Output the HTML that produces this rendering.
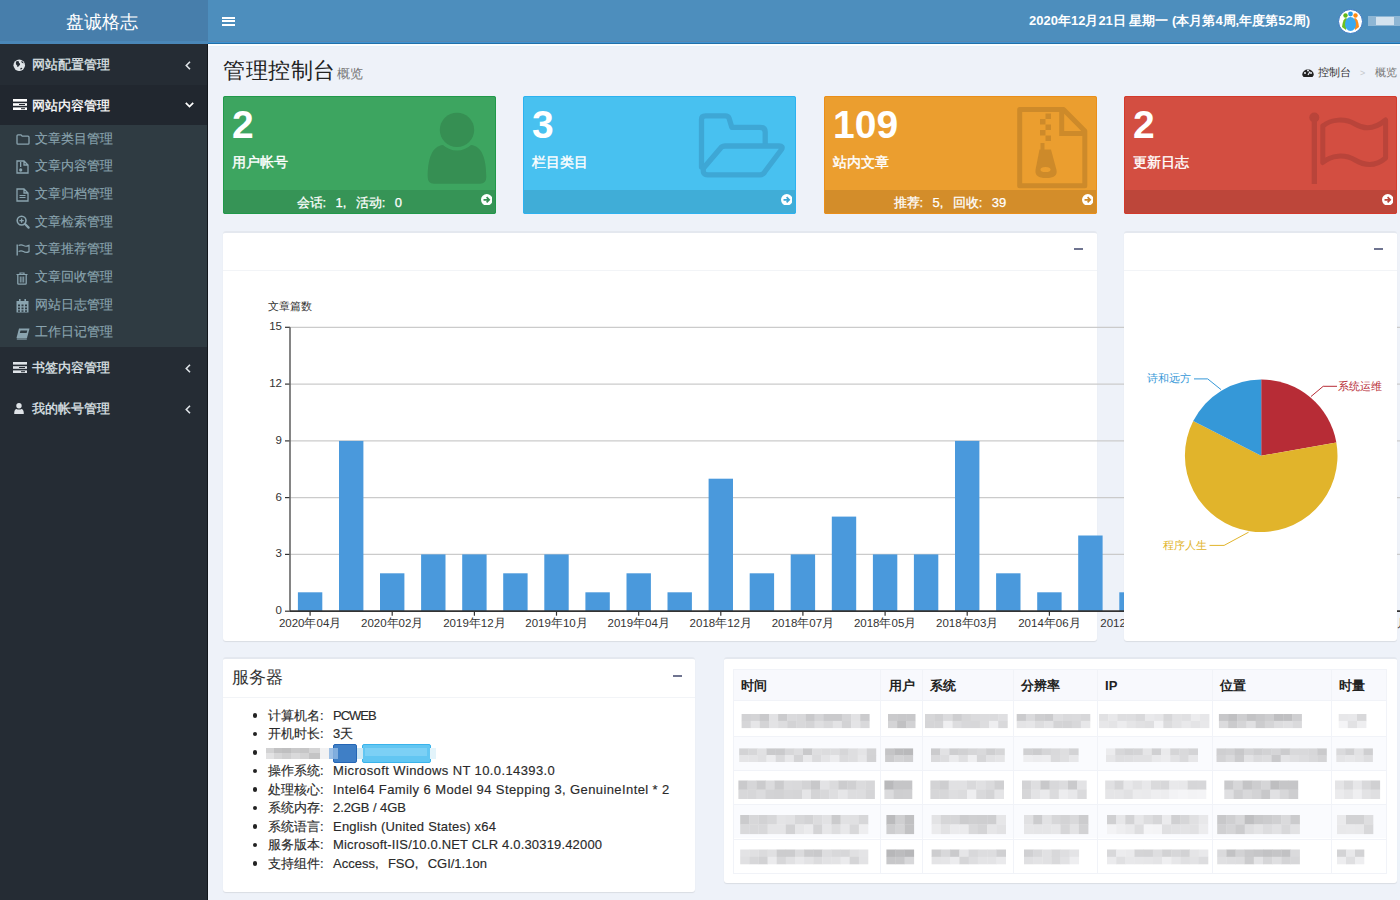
<!DOCTYPE html><html><head><meta charset="utf-8"><style>
*{box-sizing:border-box;margin:0;padding:0}
html,body{width:1400px;height:900px;overflow:hidden;background:#eef2f9;font-family:"Liberation Sans",sans-serif;color:#333}
.abs{position:absolute}
svg{display:block}
.t{position:absolute;white-space:nowrap;line-height:1}
.fw{display:inline-block;width:1em;text-align:left}
#logo{left:0;top:0;width:208px;height:44px;background:#477eab}
#nav{left:208px;top:0;width:1192px;height:44px;background:#4d8ebd}
#side{left:0;top:44px;width:208px;height:856px;background:#252c34}
.sbox{position:absolute;top:96px;width:273px;height:118px;color:#fff;border-radius:2px;overflow:hidden}
.sbox:after{content:"";position:absolute;left:0;top:0;right:0;bottom:0;border:1px solid var(--e);border-radius:2px}
.box{position:absolute;background:#fff;border-radius:3px;border-top:2px solid #e4e8ef;box-shadow:0 1px 1px rgba(0,0,0,0.09)}
.minus{position:absolute;width:9px;height:2.2px;background:#6f7490}
</style></head><body>
<div id="logo" class="abs"><div class="abs" style="left:0;top:41px;width:208px;height:3px;background:#4a87b8"></div><div class="t" style="left:66px;top:13px;font-size:18.3px;color:#fff">盘诚格志</div></div>
<div id="nav" class="abs">
<div class="abs" style="left:0;top:41px;width:1192px;height:1px;background:#5787b0"></div>
<div class="abs" style="left:0;top:42px;width:1192px;height:1px;background:#3f92d0"></div>
<div class="abs" style="left:0;top:43px;width:1192px;height:1px;background:#2070aa"></div>
<div class="abs" style="left:14px;top:16.5px;width:12.5px;height:2px;background:#fff"></div>
<div class="abs" style="left:14px;top:20.35px;width:12.5px;height:2px;background:#fff"></div>
<div class="abs" style="left:14px;top:24.2px;width:12.5px;height:2px;background:#fff"></div>
<div class="t" style="left:821px;top:14px;font-size:13px;color:#fff;font-weight:bold">2020年12月21日 星期一 (本月第4周,年度第52周)</div>
<svg class="abs" style="left:1130px;top:9px" width="25" height="25" viewBox="0 0 25 25">
<circle cx="12.5" cy="12.5" r="12" fill="#fff"/>
<circle cx="12.5" cy="12.5" r="12" fill="none" stroke="#3a78c0" stroke-width="1"/>
<path d="M4 18 Q5 9 8.5 9 Q10 12 8 21 Z" fill="#6cc020"/>
<path d="M21 18 Q20 9 16.5 9 Q15 12 17 21 Z" fill="#ff8c1a"/>
<circle cx="7.5" cy="6.5" r="2.2" fill="#60b818"/>
<circle cx="17.5" cy="6.5" r="2.2" fill="#ff8a10"/>
<circle cx="12.5" cy="5" r="2.4" fill="#2a9be8"/>
<ellipse cx="12.5" cy="15" rx="5.5" ry="7" fill="#3aa8f0"/>
</svg>
<div class="abs" style="left:1160px;top:16px;width:32px;height:10px;background:#9fc0da;opacity:.8"></div>
<div class="abs" style="left:1168px;top:17px;width:18px;height:8px;background:#d4e3ef"></div>
</div>
<div id="side" class="abs">
<div class="abs" style="left:207px;top:0;width:1px;height:856px;background:#12171c"></div>
<div class="abs" style="left:0;top:41px;width:207px;height:40px;background:#21272f"></div>
<div class="abs" style="left:0;top:81px;width:207px;height:222px;background:#2f3b42"></div>
<div class="abs" style="left:13px;top:14.8px"><svg width="12.5" height="12.5" viewBox="0 0 13 13"><circle cx="6.5" cy="6.5" r="6" fill="#dfe4e8"/><path d="M3.2 2.6 Q5 1.8 6.2 2.6 Q5.6 4.2 7.4 5 Q7.6 6.6 6 7.4 Q5.4 8.6 4.6 8.2 Q4.6 6.6 3.4 6 Q2.6 4.6 3.2 2.6 Z M8.6 1.8 Q10.6 2.8 11.2 4.4 Q9.8 4.6 9 3.6 Z M7.8 9.4 Q9 8.8 9.8 9.6 Q9 11 7.6 10.8 Z" fill="#252c34"/></svg></div>
<div class="t" style="left:32px;top:14px;font-size:13px;color:#dfe4e8;-webkit-text-stroke:0.3px #dfe4e8">网站配置管理</div>
<svg class="abs" style="left:185px;top:17px" width="6" height="9" viewBox="0 0 6 9"><path d="M5 0.8 L1.3 4.5 L5 8.2" stroke="#dfe4e8" stroke-width="1.6" fill="none"/></svg>
<div class="abs" style="left:13px;top:55.3px"><svg width="14" height="11" viewBox="0 0 14 11"><rect x="0" y="0" width="14" height="2.6" fill="#fff"/><rect x="0" y="4.2" width="14" height="2.6" fill="#fff"/><rect x="0" y="8.4" width="14" height="2.6" fill="#fff"/><rect x="6" y="5" width="6" height="1" fill="#21272f"/><rect x="8" y="9.2" width="4" height="1" fill="#21272f"/></svg></div>
<div class="t" style="left:32px;top:55px;font-size:13px;color:#fff;-webkit-text-stroke:0.3px #fff">网站内容管理</div>
<svg class="abs" style="left:185px;top:58px" width="9" height="6" viewBox="0 0 9 6"><path d="M0.8 0.8 L4.5 4.6 L8.2 0.8" stroke="#fff" stroke-width="1.7" fill="none"/></svg>
<div class="abs" style="left:13px;top:318px"><svg width="14" height="11" viewBox="0 0 14 11"><rect x="0" y="0" width="14" height="2.6" fill="#dfe4e8"/><rect x="0" y="4.2" width="14" height="2.6" fill="#dfe4e8"/><rect x="0" y="8.4" width="14" height="2.6" fill="#dfe4e8"/><rect x="6" y="5" width="6" height="1" fill="#252c34"/><rect x="8" y="9.2" width="4" height="1" fill="#252c34"/></svg></div>
<div class="t" style="left:32px;top:317px;font-size:13px;color:#dfe4e8;-webkit-text-stroke:0.3px #dfe4e8">书签内容管理</div>
<svg class="abs" style="left:185px;top:320px" width="6" height="9" viewBox="0 0 6 9"><path d="M5 0.8 L1.3 4.5 L5 8.2" stroke="#dfe4e8" stroke-width="1.6" fill="none"/></svg>
<div class="abs" style="left:13.5px;top:358.5px"><svg width="10" height="11.5" viewBox="0 0 10 11.5"><circle cx="5" cy="2.8" r="2.7" fill="#dfe4e8"/><path d="M0.2 10.5 Q0.2 6.4 2.3 5.9 Q5 7.3 7.7 5.9 Q9.8 6.4 9.8 10.5 Q9.8 11.5 8.8 11.5 H1.2 Q0.2 11.5 0.2 10.5 Z" fill="#dfe4e8"/></svg></div>
<div class="t" style="left:32px;top:358px;font-size:13px;color:#dfe4e8;-webkit-text-stroke:0.3px #dfe4e8">我的帐号管理</div>
<svg class="abs" style="left:185px;top:361px" width="6" height="9" viewBox="0 0 6 9"><path d="M5 0.8 L1.3 4.5 L5 8.2" stroke="#dfe4e8" stroke-width="1.6" fill="none"/></svg>
<div class="t" style="left:35px;top:87.7px;font-size:13px;color:#8aa4af;-webkit-text-stroke:0.15px #8aa4af">文章类目管理</div>
<div class="abs" style="left:16px;top:89.5px"><svg width="14" height="11" viewBox="0 0 14 11"><path d="M1 1.8 Q1 0.8 2 0.8 H5 L6.2 2.2 H12 Q13 2.2 13 3.2 V9.2 Q13 10.2 12 10.2 H2 Q1 10.2 1 9.2 Z" fill="none" stroke="#8aa4af" stroke-width="1.3"/></svg></div>
<div class="t" style="left:35px;top:115.4px;font-size:13px;color:#8aa4af;-webkit-text-stroke:0.15px #8aa4af">文章内容管理</div>
<div class="abs" style="left:16px;top:115.5px"><svg width="13" height="14" viewBox="0 0 13 14"><path d="M1 1 H8 L12 5 V13 H1 Z M8 1 V5 H12" fill="none" stroke="#8aa4af" stroke-width="1.3"/><rect x="4" y="2" width="1.3" height="5" fill="#8aa4af"/><ellipse cx="4.7" cy="10" rx="1.6" ry="1.8" fill="#8aa4af"/></svg></div>
<div class="t" style="left:35px;top:143.0px;font-size:13px;color:#8aa4af;-webkit-text-stroke:0.15px #8aa4af">文章归档管理</div>
<div class="abs" style="left:16px;top:143.5px"><svg width="13" height="14" viewBox="0 0 13 14"><path d="M1 1 H8 L12 5 V13 H1 Z M8 1 V5 H12" fill="none" stroke="#8aa4af" stroke-width="1.3"/><path d="M3.5 7.5 H9.5 M3.5 9.5 H9.5" stroke="#8aa4af" stroke-width="1.1"/></svg></div>
<div class="t" style="left:35px;top:170.7px;font-size:13px;color:#8aa4af;-webkit-text-stroke:0.15px #8aa4af">文章检索管理</div>
<div class="abs" style="left:16px;top:171px"><svg width="14" height="14" viewBox="0 0 14 14"><circle cx="5.6" cy="5.6" r="4.4" fill="none" stroke="#8aa4af" stroke-width="1.6"/><path d="M8.8 8.8 L12.6 12.6" stroke="#8aa4af" stroke-width="2.2" stroke-linecap="round"/><path d="M3.4 5.6 H7.8 M5.6 3.4 V7.8" stroke="#8aa4af" stroke-width="1.3"/></svg></div>
<div class="t" style="left:35px;top:198.3px;font-size:13px;color:#8aa4af;-webkit-text-stroke:0.15px #8aa4af">文章推荐管理</div>
<div class="abs" style="left:16px;top:200px"><svg width="14" height="12" viewBox="0 0 14 12"><path d="M1.2 0.5 V11.5" stroke="#8aa4af" stroke-width="1.4"/><path d="M2.6 1.6 Q5 0 7.5 1.6 Q10 3 13 1.4 V7.6 Q10 9.2 7.5 7.6 Q5 6 2.6 7.6" fill="none" stroke="#8aa4af" stroke-width="1.2"/></svg></div>
<div class="t" style="left:35px;top:226.0px;font-size:13px;color:#8aa4af;-webkit-text-stroke:0.15px #8aa4af">文章回收管理</div>
<div class="abs" style="left:16px;top:227.5px"><svg width="12" height="13" viewBox="0 0 12 13"><path d="M0.5 2.5 H11.5 M4 2.5 V1 H8 V2.5" fill="none" stroke="#8aa4af" stroke-width="1.2"/><path d="M1.8 2.5 V11.5 Q1.8 12.2 2.6 12.2 H9.4 Q10.2 12.2 10.2 11.5 V2.5" fill="none" stroke="#8aa4af" stroke-width="1.3"/><path d="M4.3 4.5 V10.5 M6 4.5 V10.5 M7.7 4.5 V10.5" stroke="#8aa4af" stroke-width="1"/></svg></div>
<div class="t" style="left:35px;top:253.7px;font-size:13px;color:#8aa4af;-webkit-text-stroke:0.15px #8aa4af">网站日志管理</div>
<div class="abs" style="left:16px;top:255px"><svg width="13" height="14" viewBox="0 0 13 14"><rect x="0.5" y="2" width="12" height="11.5" fill="#8aa4af"/><g fill="#2f3b42"><rect x="2" y="5.5" width="2" height="1.8"/><rect x="5.5" y="5.5" width="2" height="1.8"/><rect x="9" y="5.5" width="2" height="1.8"/><rect x="2" y="8.5" width="2" height="1.8"/><rect x="5.5" y="8.5" width="2" height="1.8"/><rect x="9" y="8.5" width="2" height="1.8"/><rect x="2" y="11.3" width="2" height="1.5"/><rect x="5.5" y="11.3" width="2" height="1.5"/><rect x="9" y="11.3" width="2" height="1.5"/></g><rect x="3" y="0" width="1.6" height="3.5" fill="#8aa4af"/><rect x="8.4" y="0" width="1.6" height="3.5" fill="#8aa4af"/></svg></div>
<div class="t" style="left:35px;top:281.3px;font-size:13px;color:#8aa4af;-webkit-text-stroke:0.15px #8aa4af">工作日记管理</div>
<div class="abs" style="left:16px;top:283.5px"><svg width="14" height="12" viewBox="0 0 14 12"><path d="M3 0.5 H13.5 L11 10 H0.5 Z" fill="#8aa4af"/><path d="M4.5 2.5 H11.3 L10.6 5 H3.8 Z" fill="#2f3b42"/><path d="M0.8 11 H10.8" stroke="#8aa4af" stroke-width="1.2"/></svg></div>
</div>
<div class="abs" style="left:208px;top:44px;width:1192px;height:1.5px;background:#fcfdfd"></div>
<div class="abs" style="left:208px;top:45.5px;width:1192px;height:1px;background:#e6f1fb"></div>
<div class="t" style="left:223px;top:59.5px;font-size:22.4px;color:#222;letter-spacing:0.55px">管理控制台</div>
<div class="t" style="left:337px;top:67px;font-size:13px;color:#777">概览</div>
<svg class="abs" style="left:1302px;top:68px" width="12" height="9" viewBox="0 0 12 9"><path d="M0.2 7 A5.8 5.8 0 1 1 11.8 7 L10.5 9 H1.5 Z" fill="#222"/><circle cx="3" cy="5" r="1" fill="#eef2f9"/><circle cx="6" cy="2.6" r="1" fill="#eef2f9"/><circle cx="9" cy="5" r="1" fill="#eef2f9"/><path d="M6 7 L8 3.5" stroke="#eef2f9" stroke-width="1.2"/></svg>
<div class="t" style="left:1318px;top:67px;font-size:11px;color:#333">控制台</div>
<div class="t" style="left:1360px;top:69px;font-size:9px;color:#c5c8cc">&gt;</div>
<div class="t" style="left:1375px;top:67px;font-size:11px;color:#777">概览</div>
<div class="sbox" style="left:223px;background:#3da560;--e:#20994a">
<svg class="abs" style="left:204px;top:15px" width="60" height="75" viewBox="0 0 60 75"><circle cx="30" cy="18.9" r="17.2" fill="#368f53"/><path d="M0.7 66 C0.7 48 5 35 16 34 A20.6 20.6 0 0 0 44 34 C55 35 59.3 48 59.3 66 Q59.3 72.7 53 72.7 H7 Q0.7 72.7 0.7 66 Z" fill="#368f53"/></svg>
<div class="t" style="left:9px;top:9.3px;font-size:39px;font-weight:bold">2</div>
<div class="t" style="left:9px;top:58.5px;font-size:14px;-webkit-text-stroke:0.4px #fff">用户帐号</div>
<div class="abs" style="left:0;top:94px;width:273px;height:24px;background:rgba(0,0,0,0.1)"></div>
<div class="t" style="left:73.5px;top:100px;font-size:13px;-webkit-text-stroke:0.25px #fff">会话<span class="fw">:</span>1<span class="fw">,</span>活动<span class="fw">:</span>0</div>
<svg class="abs" style="left:257.7px;top:97.6px" width="11.6" height="11.6" viewBox="0 0 11 11"><circle cx="5.5" cy="5.5" r="5.5" fill="#fff"/><path d="M2.4 5.5 H7.6 M5.3 3 L7.8 5.5 L5.3 8" stroke="#368f53" stroke-width="1.6" fill="none"/></svg>
</div>
<div class="sbox" style="left:523px;background:#48c1f0;--e:#2cb2f0">
<svg class="abs" style="left:167px;top:0px" width="100" height="94" viewBox="0 0 100 94"><path d="M11.5 71 V23.5 Q11.5 19.8 15.5 19.8 H35.5 Q38 19.8 39 22 L41.8 31.3 H70 Q75.2 31.3 75.2 36 V48" fill="none" stroke="#3ea7d5" stroke-width="5.3" stroke-linejoin="round" stroke-linecap="round"/><path d="M13.6 72 L31.3 51.2 Q33 50 35 50 H89 Q93.5 50 91.5 53.5 L75 75.5 Q73.5 78.8 70 78.8 H17.8 Q12 78.8 13.6 72 Z" fill="none" stroke="#3ea7d5" stroke-width="5.3" stroke-linejoin="round"/></svg>
<div class="t" style="left:9px;top:9.3px;font-size:39px;font-weight:bold">3</div>
<div class="t" style="left:9px;top:58.5px;font-size:14px;-webkit-text-stroke:0.4px #fff">栏目类目</div>
<div class="abs" style="left:0;top:94px;width:273px;height:24px;background:rgba(0,0,0,0.1)"></div>
<svg class="abs" style="left:257.7px;top:97.6px" width="11.6" height="11.6" viewBox="0 0 11 11"><circle cx="5.5" cy="5.5" r="5.5" fill="#fff"/><path d="M2.4 5.5 H7.6 M5.3 3 L7.8 5.5 L5.3 8" stroke="#3ea7d5" stroke-width="1.6" fill="none"/></svg>
</div>
<div class="sbox" style="left:824px;background:#eb9e2f;--e:#ea8f1a">
<svg class="abs" style="left:181px;top:0px" width="92" height="100" viewBox="0 0 92 100"><path d="M14.7 13.6 H58.5 L79.8 35 V89.8 H14.7 Z" fill="none" stroke="#cd8a2a" stroke-width="5" stroke-linejoin="round"/><path d="M56.7 14 V37.5 H80" fill="none" stroke="#cd8a2a" stroke-width="5"/>
<g fill="#cd8a2a"><rect x="40.5" y="17.5" width="5.5" height="5.5"/><rect x="35" y="23" width="5.5" height="5.5"/><rect x="40.5" y="28.5" width="5.5" height="5.5"/><rect x="35" y="34" width="5.5" height="5.5"/><rect x="40.5" y="39.5" width="5.5" height="5.5"/><rect x="35.5" y="47" width="4" height="7"/></g>
<path d="M34.5 53.5 H46 L51.5 74 Q53 82 41 82 Q29.5 82 30.5 74 Z" fill="#cd8a2a"/><ellipse cx="40.5" cy="73.5" rx="5" ry="2.6" fill="#eb9e2f"/></svg>
<div class="t" style="left:9px;top:9.3px;font-size:39px;font-weight:bold">109</div>
<div class="t" style="left:9px;top:58.5px;font-size:14px;-webkit-text-stroke:0.4px #fff">站内文章</div>
<div class="abs" style="left:0;top:94px;width:273px;height:24px;background:rgba(0,0,0,0.1)"></div>
<div class="t" style="left:69.5px;top:100px;font-size:13px;-webkit-text-stroke:0.25px #fff">推荐<span class="fw">:</span>5<span class="fw">,</span>回收<span class="fw">:</span>39</div>
<svg class="abs" style="left:257.7px;top:97.6px" width="11.6" height="11.6" viewBox="0 0 11 11"><circle cx="5.5" cy="5.5" r="5.5" fill="#fff"/><path d="M2.4 5.5 H7.6 M5.3 3 L7.8 5.5 L5.3 8" stroke="#cd8a2a" stroke-width="1.6" fill="none"/></svg>
</div>
<div class="sbox" style="left:1124px;background:#d34e41;--e:#d33a2c">
<svg class="abs" style="left:171px;top:0px" width="102" height="94" viewBox="0 0 102 94"><circle cx="19.3" cy="21.5" r="5" fill="#b9443a"/><rect x="16.7" y="22" width="5.3" height="66" fill="#b9443a"/><path d="M27.8 30 C36 23 50 22 60 28 C70 34 80 33 90.6 24 V62 C80 71 70 70 60 64 C50 58 36 59 27.8 66.5 Z" fill="none" stroke="#b9443a" stroke-width="5" stroke-linejoin="round"/></svg>
<div class="t" style="left:9px;top:9.3px;font-size:39px;font-weight:bold">2</div>
<div class="t" style="left:9px;top:58.5px;font-size:14px;-webkit-text-stroke:0.4px #fff">更新日志</div>
<div class="abs" style="left:0;top:94px;width:273px;height:24px;background:rgba(0,0,0,0.1)"></div>
<svg class="abs" style="left:257.7px;top:97.6px" width="11.6" height="11.6" viewBox="0 0 11 11"><circle cx="5.5" cy="5.5" r="5.5" fill="#fff"/><path d="M2.4 5.5 H7.6 M5.3 3 L7.8 5.5 L5.3 8" stroke="#b9443a" stroke-width="1.6" fill="none"/></svg>
</div>
<div class="box" style="left:223px;top:231px;width:873.5px;height:410px"></div>
<div class="abs" style="left:223px;top:270px;width:874px;height:1px;background:#f2f4f7"></div>
<div class="minus" style="left:1074px;top:248px"></div>
<svg class="abs" style="left:0;top:0" width="1400" height="900"><line x1="290.0" y1="554.4" x2="1400" y2="554.4" stroke="#cbcbcb" stroke-width="1.2"/><line x1="290.0" y1="497.6" x2="1400" y2="497.6" stroke="#cbcbcb" stroke-width="1.2"/><line x1="290.0" y1="440.9" x2="1400" y2="440.9" stroke="#cbcbcb" stroke-width="1.2"/><line x1="290.0" y1="384.1" x2="1400" y2="384.1" stroke="#cbcbcb" stroke-width="1.2"/><line x1="290.0" y1="327.3" x2="1400" y2="327.3" stroke="#cbcbcb" stroke-width="1.2"/><line x1="285.0" y1="611.2" x2="290.0" y2="611.2" stroke="#333" stroke-width="1.2"/><text x="282.0" y="614.2" font-size="11.5" text-anchor="end" fill="#333" font-family="Liberation Sans">0</text><line x1="285.0" y1="554.4" x2="290.0" y2="554.4" stroke="#333" stroke-width="1.2"/><text x="282.0" y="557.4" font-size="11.5" text-anchor="end" fill="#333" font-family="Liberation Sans">3</text><line x1="285.0" y1="497.6" x2="290.0" y2="497.6" stroke="#333" stroke-width="1.2"/><text x="282.0" y="500.6" font-size="11.5" text-anchor="end" fill="#333" font-family="Liberation Sans">6</text><line x1="285.0" y1="440.9" x2="290.0" y2="440.9" stroke="#333" stroke-width="1.2"/><text x="282.0" y="443.9" font-size="11.5" text-anchor="end" fill="#333" font-family="Liberation Sans">9</text><line x1="285.0" y1="384.1" x2="290.0" y2="384.1" stroke="#333" stroke-width="1.2"/><text x="282.0" y="387.1" font-size="11.5" text-anchor="end" fill="#333" font-family="Liberation Sans">12</text><line x1="285.0" y1="327.3" x2="290.0" y2="327.3" stroke="#333" stroke-width="1.2"/><text x="282.0" y="330.3" font-size="11.5" text-anchor="end" fill="#333" font-family="Liberation Sans">15</text><line x1="290.0" y1="327.3" x2="290.0" y2="611.2" stroke="#666" stroke-width="1.6"/><rect x="297.9" y="592.3" width="24.4" height="18.9" fill="#4a99dc"/><rect x="339.0" y="440.9" width="24.4" height="170.3" fill="#4a99dc"/><rect x="380.0" y="573.3" width="24.4" height="37.9" fill="#4a99dc"/><rect x="421.1" y="554.4" width="24.4" height="56.8" fill="#4a99dc"/><rect x="462.2" y="554.4" width="24.4" height="56.8" fill="#4a99dc"/><rect x="503.2" y="573.3" width="24.4" height="37.9" fill="#4a99dc"/><rect x="544.3" y="554.4" width="24.4" height="56.8" fill="#4a99dc"/><rect x="585.4" y="592.3" width="24.4" height="18.9" fill="#4a99dc"/><rect x="626.5" y="573.3" width="24.4" height="37.9" fill="#4a99dc"/><rect x="667.5" y="592.3" width="24.4" height="18.9" fill="#4a99dc"/><rect x="708.6" y="478.7" width="24.4" height="132.5" fill="#4a99dc"/><rect x="749.7" y="573.3" width="24.4" height="37.9" fill="#4a99dc"/><rect x="790.7" y="554.4" width="24.4" height="56.8" fill="#4a99dc"/><rect x="831.8" y="516.6" width="24.4" height="94.6" fill="#4a99dc"/><rect x="872.9" y="554.4" width="24.4" height="56.8" fill="#4a99dc"/><rect x="913.9" y="554.4" width="24.4" height="56.8" fill="#4a99dc"/><rect x="955.0" y="440.9" width="24.4" height="170.3" fill="#4a99dc"/><rect x="996.1" y="573.3" width="24.4" height="37.9" fill="#4a99dc"/><rect x="1037.2" y="592.3" width="24.4" height="18.9" fill="#4a99dc"/><rect x="1078.2" y="535.5" width="24.4" height="75.7" fill="#4a99dc"/><rect x="1119.3" y="592.3" width="24.4" height="18.9" fill="#4a99dc"/><rect x="1160.4" y="573.3" width="24.4" height="37.9" fill="#4a99dc"/><rect x="1201.4" y="554.4" width="24.4" height="56.8" fill="#4a99dc"/><rect x="1242.5" y="592.3" width="24.4" height="18.9" fill="#4a99dc"/><rect x="1283.6" y="573.3" width="24.4" height="37.9" fill="#4a99dc"/><rect x="1324.7" y="592.3" width="24.4" height="18.9" fill="#4a99dc"/><rect x="1365.7" y="592.3" width="24.4" height="18.9" fill="#4a99dc"/><line x1="290.0" y1="611.2" x2="1400" y2="611.2" stroke="#333" stroke-width="1.8"/><line x1="310.1" y1="611.2" x2="310.1" y2="615.7" stroke="#333" stroke-width="1.2"/><text x="310.1" y="626.7" font-size="11.5" text-anchor="middle" fill="#333" font-family="Liberation Sans">2020年04月</text><line x1="392.2" y1="611.2" x2="392.2" y2="615.7" stroke="#333" stroke-width="1.2"/><text x="392.2" y="626.7" font-size="11.5" text-anchor="middle" fill="#333" font-family="Liberation Sans">2020年02月</text><line x1="474.4" y1="611.2" x2="474.4" y2="615.7" stroke="#333" stroke-width="1.2"/><text x="474.4" y="626.7" font-size="11.5" text-anchor="middle" fill="#333" font-family="Liberation Sans">2019年12月</text><line x1="556.5" y1="611.2" x2="556.5" y2="615.7" stroke="#333" stroke-width="1.2"/><text x="556.5" y="626.7" font-size="11.5" text-anchor="middle" fill="#333" font-family="Liberation Sans">2019年10月</text><line x1="638.7" y1="611.2" x2="638.7" y2="615.7" stroke="#333" stroke-width="1.2"/><text x="638.7" y="626.7" font-size="11.5" text-anchor="middle" fill="#333" font-family="Liberation Sans">2019年04月</text><line x1="720.8" y1="611.2" x2="720.8" y2="615.7" stroke="#333" stroke-width="1.2"/><text x="720.8" y="626.7" font-size="11.5" text-anchor="middle" fill="#333" font-family="Liberation Sans">2018年12月</text><line x1="802.9" y1="611.2" x2="802.9" y2="615.7" stroke="#333" stroke-width="1.2"/><text x="802.9" y="626.7" font-size="11.5" text-anchor="middle" fill="#333" font-family="Liberation Sans">2018年07月</text><line x1="885.1" y1="611.2" x2="885.1" y2="615.7" stroke="#333" stroke-width="1.2"/><text x="885.1" y="626.7" font-size="11.5" text-anchor="middle" fill="#333" font-family="Liberation Sans">2018年05月</text><line x1="967.2" y1="611.2" x2="967.2" y2="615.7" stroke="#333" stroke-width="1.2"/><text x="967.2" y="626.7" font-size="11.5" text-anchor="middle" fill="#333" font-family="Liberation Sans">2018年03月</text><line x1="1049.4" y1="611.2" x2="1049.4" y2="615.7" stroke="#333" stroke-width="1.2"/><text x="1049.4" y="626.7" font-size="11.5" text-anchor="middle" fill="#333" font-family="Liberation Sans">2014年06月</text><line x1="1131.5" y1="611.2" x2="1131.5" y2="615.7" stroke="#333" stroke-width="1.2"/><text x="1131.5" y="626.7" font-size="11.5" text-anchor="middle" fill="#333" font-family="Liberation Sans">2012年08月</text><line x1="1213.6" y1="611.2" x2="1213.6" y2="615.7" stroke="#333" stroke-width="1.2"/><text x="1213.6" y="626.7" font-size="11.5" text-anchor="middle" fill="#333" font-family="Liberation Sans">2012年03月</text><line x1="1295.8" y1="611.2" x2="1295.8" y2="615.7" stroke="#333" stroke-width="1.2"/><text x="1295.8" y="626.7" font-size="11.5" text-anchor="middle" fill="#333" font-family="Liberation Sans">2011年05月</text><line x1="1377.9" y1="611.2" x2="1377.9" y2="615.7" stroke="#333" stroke-width="1.2"/><text x="1377.9" y="626.7" font-size="11.5" text-anchor="middle" fill="#333" font-family="Liberation Sans">2010年01月</text><text x="268" y="310" font-size="11" fill="#333" font-family="Liberation Sans">文章篇数</text></svg>
<div class="box" style="left:1124px;top:231px;width:273px;height:410px"></div>
<div class="abs" style="left:1124px;top:270px;width:273px;height:1px;background:#f2f4f7"></div>
<div class="minus" style="left:1374px;top:248px"></div>
<svg class="abs" style="left:0;top:0" width="1400" height="900"><path d="M1261.2 455.7 L1261.20 379.40 A76.3 76.3 0 0 1 1336.34 442.45 Z" fill="#b72c36"/><path d="M1261.2 455.7 L1336.34 442.45 A76.3 76.3 0 1 1 1193.22 421.06 Z" fill="#e1b42b"/><path d="M1261.2 455.7 L1193.22 421.06 A76.3 76.3 0 0 1 1261.20 379.40 Z" fill="#3598d8"/><polyline points="1311,396.5 1323.2,386.3 1337,386.3" fill="none" stroke="#b72c36"/><text x="1338" y="389.5" font-size="11" fill="#b72c36" font-family="Liberation Sans">系统运维</text><polyline points="1221,389.6 1207.7,378.9 1194,378.9" fill="none" stroke="#3598d8"/><text x="1147" y="381.5" font-size="11" fill="#3598d8" font-family="Liberation Sans">诗和远方</text><polyline points="1248.6,532.2 1224.1,545.4 1209.5,545.4" fill="none" stroke="#e1b42b"/><text x="1163" y="548.5" font-size="11" fill="#e1b42b" font-family="Liberation Sans">程序人生</text></svg>
<div class="box" style="left:223px;top:657px;width:472px;height:234.5px"></div>
<div class="abs" style="left:223px;top:697px;width:472px;height:1px;background:#f2f4f7"></div>
<div class="t" style="left:232px;top:669px;font-size:17px;color:#333">服务器</div>
<div class="minus" style="left:673px;top:675px"></div>
<div class="abs" style="left:252.8px;top:713.3px;width:4.4px;height:4.4px;border-radius:50%;background:#222"></div>
<div class="t" style="left:268px;top:708.5px;font-size:13px;color:#2a2a2a;-webkit-text-stroke:0.15px #2a2a2a">计算机名<span class="fw">:</span><span style="letter-spacing:-1.0px">PCWEB</span></div>
<div class="abs" style="left:252.8px;top:731.8px;width:4.4px;height:4.4px;border-radius:50%;background:#222"></div>
<div class="t" style="left:268px;top:727.0px;font-size:13px;color:#2a2a2a;-webkit-text-stroke:0.15px #2a2a2a">开机时长<span class="fw">:</span><span style="letter-spacing:0px">3天</span></div>
<div class="abs" style="left:252.8px;top:750.3px;width:4.4px;height:4.4px;border-radius:50%;background:#222"></div>
<div class="abs" style="left:266px;top:748px;width:8px;height:5.3px;background:#d2d2d3"></div>
<div class="abs" style="left:266px;top:753.3px;width:8px;height:5.3px;background:#e2e2e3"></div>
<div class="abs" style="left:274px;top:748px;width:8px;height:5.3px;background:#c2c2c3"></div>
<div class="abs" style="left:274px;top:753.3px;width:8px;height:5.3px;background:#d6d6d7"></div>
<div class="abs" style="left:282px;top:748px;width:9px;height:5.3px;background:#bfbfc0"></div>
<div class="abs" style="left:282px;top:753.3px;width:9px;height:5.3px;background:#cfcfd0"></div>
<div class="abs" style="left:291px;top:748px;width:9px;height:5.3px;background:#c9c9ca"></div>
<div class="abs" style="left:291px;top:753.3px;width:9px;height:5.3px;background:#d9d9da"></div>
<div class="abs" style="left:300px;top:748px;width:9px;height:5.3px;background:#c6c6c7"></div>
<div class="abs" style="left:300px;top:753.3px;width:9px;height:5.3px;background:#d3d3d4"></div>
<div class="abs" style="left:309px;top:748px;width:11px;height:5.3px;background:#d4d4d5"></div>
<div class="abs" style="left:309px;top:753.3px;width:11px;height:5.3px;background:#c4c4c5"></div>
<div class="abs" style="left:320px;top:748px;width:13px;height:10.6px;background:#f2f2f3"></div>
<div class="abs" style="left:333px;top:744.3px;width:24.2px;height:18.6px;background:#3f7fc6;border:1.5px solid #2566b5;border-radius:2px"></div>
<div class="abs" style="left:329px;top:748px;width:9px;height:10.6px;background:#8db6e2;opacity:.85"></div>
<div class="abs" style="left:362px;top:744.3px;width:68.6px;height:18.6px;background:#62c6f2;border:1.5px solid #3ab3eb;border-radius:2px"></div>
<div class="abs" style="left:365px;top:748px;width:62px;height:8px;background:#7cd0f5"></div>
<div class="abs" style="left:357px;top:748px;width:6px;height:10.6px;background:#cfe8f3"></div>
<div class="abs" style="left:430px;top:748px;width:6px;height:10.6px;background:#e3f4fb"></div>
<div class="abs" style="left:252.8px;top:768.8px;width:4.4px;height:4.4px;border-radius:50%;background:#222"></div>
<div class="t" style="left:268px;top:764.0px;font-size:13px;color:#2a2a2a;-webkit-text-stroke:0.15px #2a2a2a">操作系统<span class="fw">:</span><span style="letter-spacing:0.39px">Microsoft Windows NT 10.0.14393.0</span></div>
<div class="abs" style="left:252.8px;top:787.3px;width:4.4px;height:4.4px;border-radius:50%;background:#222"></div>
<div class="t" style="left:268px;top:782.5px;font-size:13px;color:#2a2a2a;-webkit-text-stroke:0.15px #2a2a2a">处理核心<span class="fw">:</span><span style="letter-spacing:0.4px">Intel64 Family 6 Model 94 Stepping 3, GenuineIntel * 2</span></div>
<div class="abs" style="left:252.8px;top:805.8px;width:4.4px;height:4.4px;border-radius:50%;background:#222"></div>
<div class="t" style="left:268px;top:801.0px;font-size:13px;color:#2a2a2a;-webkit-text-stroke:0.15px #2a2a2a">系统内存<span class="fw">:</span><span style="letter-spacing:-0.08px">2.2GB / 4GB</span></div>
<div class="abs" style="left:252.8px;top:824.3px;width:4.4px;height:4.4px;border-radius:50%;background:#222"></div>
<div class="t" style="left:268px;top:819.5px;font-size:13px;color:#2a2a2a;-webkit-text-stroke:0.15px #2a2a2a">系统语言<span class="fw">:</span><span style="letter-spacing:0.21px">English (United States) x64</span></div>
<div class="abs" style="left:252.8px;top:842.8px;width:4.4px;height:4.4px;border-radius:50%;background:#222"></div>
<div class="t" style="left:268px;top:838.0px;font-size:13px;color:#2a2a2a;-webkit-text-stroke:0.15px #2a2a2a">服务版本<span class="fw">:</span><span style="letter-spacing:0.17px">Microsoft-IIS/10.0.NET CLR 4.0.30319.42000</span></div>
<div class="abs" style="left:252.8px;top:861.3px;width:4.4px;height:4.4px;border-radius:50%;background:#222"></div>
<div class="t" style="left:268px;top:856.5px;font-size:13px;color:#2a2a2a;-webkit-text-stroke:0.15px #2a2a2a">支持组件<span class="fw">:</span><span style="letter-spacing:0px">Access<span class="fw">,</span>FSO<span class="fw">,</span>CGI/1.1on</span></div>
<div class="box" style="left:723.5px;top:657px;width:673.5px;height:225.5px"></div>
<div class="abs" style="left:732.5px;top:668.6px;width:654px;height:31.7px;background:#f8f9fd"></div>
<div class="abs" style="left:732.5px;top:735.8px;width:654px;height:34.2px;background:#fafbfe"></div>
<div class="abs" style="left:732.5px;top:804.3px;width:654px;height:34.2px;background:#fafbfe"></div>
<div class="t" style="left:740.9px;top:679px;font-size:13px;font-weight:bold;color:#222">时间</div>
<div class="t" style="left:888.7px;top:679px;font-size:13px;font-weight:bold;color:#222">用户</div>
<div class="t" style="left:930.2px;top:679px;font-size:13px;font-weight:bold;color:#222">系统</div>
<div class="t" style="left:1021.4px;top:679px;font-size:13px;font-weight:bold;color:#222">分辨率</div>
<div class="t" style="left:1105.1px;top:679px;font-size:13px;font-weight:bold;color:#222">IP</div>
<div class="t" style="left:1220.0px;top:679px;font-size:13px;font-weight:bold;color:#222">位置</div>
<div class="t" style="left:1339.3px;top:679px;font-size:13px;font-weight:bold;color:#222">时量</div>
<div class="abs" style="left:732.5px;top:668.6px;width:1px;height:204px;background:#f1f3f8"></div>
<div class="abs" style="left:880.3px;top:668.6px;width:1px;height:204px;background:#f1f3f8"></div>
<div class="abs" style="left:921.8px;top:668.6px;width:1px;height:204px;background:#f1f3f8"></div>
<div class="abs" style="left:1013.0px;top:668.6px;width:1px;height:204px;background:#f1f3f8"></div>
<div class="abs" style="left:1096.7px;top:668.6px;width:1px;height:204px;background:#f1f3f8"></div>
<div class="abs" style="left:1211.6px;top:668.6px;width:1px;height:204px;background:#f1f3f8"></div>
<div class="abs" style="left:1330.9px;top:668.6px;width:1px;height:204px;background:#f1f3f8"></div>
<div class="abs" style="left:1386.4px;top:668.6px;width:1px;height:204px;background:#f1f3f8"></div>
<div class="abs" style="left:732.5px;top:668.6px;width:654px;height:1px;background:#f1f3f8"></div>
<div class="abs" style="left:732.5px;top:700.3px;width:654px;height:1px;background:#f1f3f8"></div>
<div class="abs" style="left:732.5px;top:735.8px;width:654px;height:1px;background:#f1f3f8"></div>
<div class="abs" style="left:732.5px;top:770.0px;width:654px;height:1px;background:#f1f3f8"></div>
<div class="abs" style="left:732.5px;top:804.3px;width:654px;height:1px;background:#f1f3f8"></div>
<div class="abs" style="left:732.5px;top:838.5px;width:654px;height:1px;background:#f1f3f8"></div>
<div class="abs" style="left:732.5px;top:872.7px;width:654px;height:1px;background:#f1f3f8"></div>
<svg class="abs" style="left:0;top:0" width="1400" height="900"><rect x="741.6" y="714.0" width="9.4" height="7.2" fill="rgb(210,210,212)"/><rect x="741.6" y="720.9" width="9.4" height="7.2" fill="rgb(214,214,216)"/><rect x="750.7" y="714.0" width="9.4" height="7.2" fill="rgb(212,212,214)"/><rect x="750.7" y="720.9" width="9.4" height="7.2" fill="rgb(230,230,232)"/><rect x="759.8" y="714.0" width="9.4" height="7.2" fill="rgb(201,201,203)"/><rect x="759.8" y="720.9" width="9.4" height="7.2" fill="rgb(212,212,214)"/><rect x="769.0" y="714.0" width="9.4" height="7.2" fill="rgb(226,226,228)"/><rect x="769.0" y="720.9" width="9.4" height="7.2" fill="rgb(227,227,229)"/><rect x="778.1" y="714.0" width="9.4" height="7.2" fill="rgb(203,203,205)"/><rect x="778.1" y="720.9" width="9.4" height="7.2" fill="rgb(221,221,223)"/><rect x="787.2" y="714.0" width="9.4" height="7.2" fill="rgb(218,218,220)"/><rect x="787.2" y="720.9" width="9.4" height="7.2" fill="rgb(211,211,213)"/><rect x="796.3" y="714.0" width="9.4" height="7.2" fill="rgb(216,216,218)"/><rect x="796.3" y="720.9" width="9.4" height="7.2" fill="rgb(216,216,218)"/><rect x="805.5" y="714.0" width="9.4" height="7.2" fill="rgb(201,201,203)"/><rect x="805.5" y="720.9" width="9.4" height="7.2" fill="rgb(212,212,214)"/><rect x="814.6" y="714.0" width="9.4" height="7.2" fill="rgb(213,213,215)"/><rect x="814.6" y="720.9" width="9.4" height="7.2" fill="rgb(223,223,225)"/><rect x="823.7" y="714.0" width="9.4" height="7.2" fill="rgb(202,202,204)"/><rect x="823.7" y="720.9" width="9.4" height="7.2" fill="rgb(217,217,219)"/><rect x="832.8" y="714.0" width="9.4" height="7.2" fill="rgb(202,202,204)"/><rect x="832.8" y="720.9" width="9.4" height="7.2" fill="rgb(227,227,229)"/><rect x="841.9" y="714.0" width="9.4" height="7.2" fill="rgb(213,213,215)"/><rect x="841.9" y="720.9" width="9.4" height="7.2" fill="rgb(211,211,213)"/><rect x="851.1" y="714.0" width="9.4" height="7.2" fill="rgb(226,226,228)"/><rect x="851.1" y="720.9" width="9.4" height="7.2" fill="rgb(228,228,230)"/><rect x="860.2" y="714.0" width="9.4" height="7.2" fill="rgb(203,203,205)"/><rect x="860.2" y="720.9" width="9.4" height="7.2" fill="rgb(217,217,219)"/><rect x="888.0" y="714.0" width="9.4" height="7.2" fill="rgb(202,202,204)"/><rect x="888.0" y="720.9" width="9.4" height="7.2" fill="rgb(212,212,214)"/><rect x="897.1" y="714.0" width="9.4" height="7.2" fill="rgb(200,200,202)"/><rect x="897.1" y="720.9" width="9.4" height="7.2" fill="rgb(193,193,195)"/><rect x="906.1" y="714.0" width="9.4" height="7.2" fill="rgb(200,200,202)"/><rect x="906.1" y="720.9" width="9.4" height="7.2" fill="rgb(210,210,212)"/><rect x="925.0" y="714.0" width="9.5" height="7.2" fill="rgb(214,214,216)"/><rect x="925.0" y="720.9" width="9.5" height="7.2" fill="rgb(213,213,215)"/><rect x="934.2" y="714.0" width="9.5" height="7.2" fill="rgb(209,209,211)"/><rect x="934.2" y="720.9" width="9.5" height="7.2" fill="rgb(213,213,215)"/><rect x="943.3" y="714.0" width="9.5" height="7.2" fill="rgb(219,219,221)"/><rect x="943.3" y="720.9" width="9.5" height="7.2" fill="rgb(239,239,241)"/><rect x="952.5" y="714.0" width="9.5" height="7.2" fill="rgb(206,206,208)"/><rect x="952.5" y="720.9" width="9.5" height="7.2" fill="rgb(221,221,223)"/><rect x="961.6" y="714.0" width="9.5" height="7.2" fill="rgb(215,215,217)"/><rect x="961.6" y="720.9" width="9.5" height="7.2" fill="rgb(216,216,218)"/><rect x="970.8" y="714.0" width="9.5" height="7.2" fill="rgb(219,219,221)"/><rect x="970.8" y="720.9" width="9.5" height="7.2" fill="rgb(215,215,217)"/><rect x="979.9" y="714.0" width="9.5" height="7.2" fill="rgb(220,220,222)"/><rect x="979.9" y="720.9" width="9.5" height="7.2" fill="rgb(221,221,223)"/><rect x="989.1" y="714.0" width="9.5" height="7.2" fill="rgb(219,219,221)"/><rect x="989.1" y="720.9" width="9.5" height="7.2" fill="rgb(238,238,240)"/><rect x="998.2" y="714.0" width="9.5" height="7.2" fill="rgb(223,223,225)"/><rect x="998.2" y="720.9" width="9.5" height="7.2" fill="rgb(217,217,219)"/><rect x="1016.7" y="714.0" width="9.5" height="7.2" fill="rgb(203,203,205)"/><rect x="1016.7" y="720.9" width="9.5" height="7.2" fill="rgb(228,228,230)"/><rect x="1025.9" y="714.0" width="9.5" height="7.2" fill="rgb(218,218,220)"/><rect x="1025.9" y="720.9" width="9.5" height="7.2" fill="rgb(230,230,232)"/><rect x="1035.0" y="714.0" width="9.5" height="7.2" fill="rgb(206,206,208)"/><rect x="1035.0" y="720.9" width="9.5" height="7.2" fill="rgb(221,221,223)"/><rect x="1044.2" y="714.0" width="9.5" height="7.2" fill="rgb(203,203,205)"/><rect x="1044.2" y="720.9" width="9.5" height="7.2" fill="rgb(227,227,229)"/><rect x="1053.3" y="714.0" width="9.5" height="7.2" fill="rgb(222,222,224)"/><rect x="1053.3" y="720.9" width="9.5" height="7.2" fill="rgb(212,212,214)"/><rect x="1062.5" y="714.0" width="9.5" height="7.2" fill="rgb(218,218,220)"/><rect x="1062.5" y="720.9" width="9.5" height="7.2" fill="rgb(211,211,213)"/><rect x="1071.7" y="714.0" width="9.5" height="7.2" fill="rgb(219,219,221)"/><rect x="1071.7" y="720.9" width="9.5" height="7.2" fill="rgb(216,216,218)"/><rect x="1080.8" y="714.0" width="9.5" height="7.2" fill="rgb(215,215,217)"/><rect x="1080.8" y="720.9" width="9.5" height="7.2" fill="rgb(231,231,233)"/><rect x="1099.1" y="714.0" width="9.5" height="7.2" fill="rgb(225,225,227)"/><rect x="1099.1" y="720.9" width="9.5" height="7.2" fill="rgb(231,231,233)"/><rect x="1108.3" y="714.0" width="9.5" height="7.2" fill="rgb(232,232,234)"/><rect x="1108.3" y="720.9" width="9.5" height="7.2" fill="rgb(228,228,230)"/><rect x="1117.4" y="714.0" width="9.5" height="7.2" fill="rgb(222,222,224)"/><rect x="1117.4" y="720.9" width="9.5" height="7.2" fill="rgb(236,236,238)"/><rect x="1126.6" y="714.0" width="9.5" height="7.2" fill="rgb(222,222,224)"/><rect x="1126.6" y="720.9" width="9.5" height="7.2" fill="rgb(229,229,231)"/><rect x="1135.8" y="714.0" width="9.5" height="7.2" fill="rgb(217,217,219)"/><rect x="1135.8" y="720.9" width="9.5" height="7.2" fill="rgb(225,225,227)"/><rect x="1144.9" y="714.0" width="9.5" height="7.2" fill="rgb(233,233,235)"/><rect x="1144.9" y="720.9" width="9.5" height="7.2" fill="rgb(223,223,225)"/><rect x="1154.1" y="714.0" width="9.5" height="7.2" fill="rgb(230,230,232)"/><rect x="1154.1" y="720.9" width="9.5" height="7.2" fill="rgb(242,242,244)"/><rect x="1163.3" y="714.0" width="9.5" height="7.2" fill="rgb(215,215,217)"/><rect x="1163.3" y="720.9" width="9.5" height="7.2" fill="rgb(220,220,222)"/><rect x="1172.4" y="714.0" width="9.5" height="7.2" fill="rgb(226,226,228)"/><rect x="1172.4" y="720.9" width="9.5" height="7.2" fill="rgb(227,227,229)"/><rect x="1181.6" y="714.0" width="9.5" height="7.2" fill="rgb(224,224,226)"/><rect x="1181.6" y="720.9" width="9.5" height="7.2" fill="rgb(233,233,235)"/><rect x="1190.8" y="714.0" width="9.5" height="7.2" fill="rgb(236,236,238)"/><rect x="1190.8" y="720.9" width="9.5" height="7.2" fill="rgb(228,228,230)"/><rect x="1199.9" y="714.0" width="9.5" height="7.2" fill="rgb(231,231,233)"/><rect x="1199.9" y="720.9" width="9.5" height="7.2" fill="rgb(232,232,234)"/><rect x="1218.9" y="714.0" width="9.5" height="7.2" fill="rgb(199,199,201)"/><rect x="1218.9" y="720.9" width="9.5" height="7.2" fill="rgb(219,219,221)"/><rect x="1228.1" y="714.0" width="9.5" height="7.2" fill="rgb(192,192,194)"/><rect x="1228.1" y="720.9" width="9.5" height="7.2" fill="rgb(203,203,205)"/><rect x="1237.3" y="714.0" width="9.5" height="7.2" fill="rgb(206,206,208)"/><rect x="1237.3" y="720.9" width="9.5" height="7.2" fill="rgb(213,213,215)"/><rect x="1246.5" y="714.0" width="9.5" height="7.2" fill="rgb(195,195,197)"/><rect x="1246.5" y="720.9" width="9.5" height="7.2" fill="rgb(224,224,226)"/><rect x="1255.7" y="714.0" width="9.5" height="7.2" fill="rgb(200,200,202)"/><rect x="1255.7" y="720.9" width="9.5" height="7.2" fill="rgb(204,204,206)"/><rect x="1264.8" y="714.0" width="9.5" height="7.2" fill="rgb(205,205,207)"/><rect x="1264.8" y="720.9" width="9.5" height="7.2" fill="rgb(213,213,215)"/><rect x="1274.0" y="714.0" width="9.5" height="7.2" fill="rgb(191,191,193)"/><rect x="1274.0" y="720.9" width="9.5" height="7.2" fill="rgb(221,221,223)"/><rect x="1283.2" y="714.0" width="9.5" height="7.2" fill="rgb(192,192,194)"/><rect x="1283.2" y="720.9" width="9.5" height="7.2" fill="rgb(224,224,226)"/><rect x="1292.4" y="714.0" width="9.5" height="7.2" fill="rgb(207,207,209)"/><rect x="1292.4" y="720.9" width="9.5" height="7.2" fill="rgb(218,218,220)"/><rect x="1338.7" y="714.0" width="9.4" height="7.2" fill="rgb(231,231,233)"/><rect x="1338.7" y="720.9" width="9.4" height="7.2" fill="rgb(244,244,246)"/><rect x="1347.8" y="714.0" width="9.4" height="7.2" fill="rgb(232,232,234)"/><rect x="1347.8" y="720.9" width="9.4" height="7.2" fill="rgb(226,226,228)"/><rect x="1357.0" y="714.0" width="9.4" height="7.2" fill="rgb(216,216,218)"/><rect x="1357.0" y="720.9" width="9.4" height="7.2" fill="rgb(238,238,240)"/><rect x="739.2" y="748.4" width="9.4" height="7.0" fill="rgb(211,211,213)"/><rect x="739.2" y="755.0" width="9.4" height="7.0" fill="rgb(229,229,231)"/><rect x="748.3" y="748.4" width="9.4" height="7.0" fill="rgb(215,215,217)"/><rect x="748.3" y="755.0" width="9.4" height="7.0" fill="rgb(228,228,230)"/><rect x="757.4" y="748.4" width="9.4" height="7.0" fill="rgb(225,225,227)"/><rect x="757.4" y="755.0" width="9.4" height="7.0" fill="rgb(224,224,226)"/><rect x="766.5" y="748.4" width="9.4" height="7.0" fill="rgb(202,202,204)"/><rect x="766.5" y="755.0" width="9.4" height="7.0" fill="rgb(236,236,238)"/><rect x="775.7" y="748.4" width="9.4" height="7.0" fill="rgb(202,202,204)"/><rect x="775.7" y="755.0" width="9.4" height="7.0" fill="rgb(218,218,220)"/><rect x="784.8" y="748.4" width="9.4" height="7.0" fill="rgb(215,215,217)"/><rect x="784.8" y="755.0" width="9.4" height="7.0" fill="rgb(232,232,234)"/><rect x="793.9" y="748.4" width="9.4" height="7.0" fill="rgb(221,221,223)"/><rect x="793.9" y="755.0" width="9.4" height="7.0" fill="rgb(212,212,214)"/><rect x="803.0" y="748.4" width="9.4" height="7.0" fill="rgb(201,201,203)"/><rect x="803.0" y="755.0" width="9.4" height="7.0" fill="rgb(233,233,235)"/><rect x="812.1" y="748.4" width="9.4" height="7.0" fill="rgb(222,222,224)"/><rect x="812.1" y="755.0" width="9.4" height="7.0" fill="rgb(219,219,221)"/><rect x="821.2" y="748.4" width="9.4" height="7.0" fill="rgb(220,220,222)"/><rect x="821.2" y="755.0" width="9.4" height="7.0" fill="rgb(228,228,230)"/><rect x="830.3" y="748.4" width="9.4" height="7.0" fill="rgb(221,221,223)"/><rect x="830.3" y="755.0" width="9.4" height="7.0" fill="rgb(236,236,238)"/><rect x="839.4" y="748.4" width="9.4" height="7.0" fill="rgb(214,214,216)"/><rect x="839.4" y="755.0" width="9.4" height="7.0" fill="rgb(219,219,221)"/><rect x="848.6" y="748.4" width="9.4" height="7.0" fill="rgb(222,222,224)"/><rect x="848.6" y="755.0" width="9.4" height="7.0" fill="rgb(222,222,224)"/><rect x="857.7" y="748.4" width="9.4" height="7.0" fill="rgb(228,228,230)"/><rect x="857.7" y="755.0" width="9.4" height="7.0" fill="rgb(231,231,233)"/><rect x="866.8" y="748.4" width="9.4" height="7.0" fill="rgb(211,211,213)"/><rect x="866.8" y="755.0" width="9.4" height="7.0" fill="rgb(210,210,212)"/><rect x="885.1" y="748.4" width="9.5" height="7.0" fill="rgb(196,196,198)"/><rect x="885.1" y="755.0" width="9.5" height="7.0" fill="rgb(203,203,205)"/><rect x="894.3" y="748.4" width="9.5" height="7.0" fill="rgb(187,187,189)"/><rect x="894.3" y="755.0" width="9.5" height="7.0" fill="rgb(211,211,213)"/><rect x="903.6" y="748.4" width="9.5" height="7.0" fill="rgb(185,185,187)"/><rect x="903.6" y="755.0" width="9.5" height="7.0" fill="rgb(207,207,209)"/><rect x="931.0" y="748.4" width="9.5" height="7.0" fill="rgb(203,203,205)"/><rect x="931.0" y="755.0" width="9.5" height="7.0" fill="rgb(218,218,220)"/><rect x="940.2" y="748.4" width="9.5" height="7.0" fill="rgb(226,226,228)"/><rect x="940.2" y="755.0" width="9.5" height="7.0" fill="rgb(221,221,223)"/><rect x="949.4" y="748.4" width="9.5" height="7.0" fill="rgb(206,206,208)"/><rect x="949.4" y="755.0" width="9.5" height="7.0" fill="rgb(235,235,237)"/><rect x="958.6" y="748.4" width="9.5" height="7.0" fill="rgb(209,209,211)"/><rect x="958.6" y="755.0" width="9.5" height="7.0" fill="rgb(224,224,226)"/><rect x="967.8" y="748.4" width="9.5" height="7.0" fill="rgb(214,214,216)"/><rect x="967.8" y="755.0" width="9.5" height="7.0" fill="rgb(239,239,241)"/><rect x="976.9" y="748.4" width="9.5" height="7.0" fill="rgb(217,217,219)"/><rect x="976.9" y="755.0" width="9.5" height="7.0" fill="rgb(214,214,216)"/><rect x="986.1" y="748.4" width="9.5" height="7.0" fill="rgb(207,207,209)"/><rect x="986.1" y="755.0" width="9.5" height="7.0" fill="rgb(226,226,228)"/><rect x="995.3" y="748.4" width="9.5" height="7.0" fill="rgb(214,214,216)"/><rect x="995.3" y="755.0" width="9.5" height="7.0" fill="rgb(229,229,231)"/><rect x="1023.3" y="748.4" width="9.5" height="7.0" fill="rgb(208,208,210)"/><rect x="1023.3" y="755.0" width="9.5" height="7.0" fill="rgb(238,238,240)"/><rect x="1032.5" y="748.4" width="9.5" height="7.0" fill="rgb(204,204,206)"/><rect x="1032.5" y="755.0" width="9.5" height="7.0" fill="rgb(236,236,238)"/><rect x="1041.6" y="748.4" width="9.5" height="7.0" fill="rgb(213,213,215)"/><rect x="1041.6" y="755.0" width="9.5" height="7.0" fill="rgb(237,237,239)"/><rect x="1050.8" y="748.4" width="9.5" height="7.0" fill="rgb(217,217,219)"/><rect x="1050.8" y="755.0" width="9.5" height="7.0" fill="rgb(218,218,220)"/><rect x="1060.0" y="748.4" width="9.5" height="7.0" fill="rgb(222,222,224)"/><rect x="1060.0" y="755.0" width="9.5" height="7.0" fill="rgb(223,223,225)"/><rect x="1069.1" y="748.4" width="9.5" height="7.0" fill="rgb(211,211,213)"/><rect x="1069.1" y="755.0" width="9.5" height="7.0" fill="rgb(231,231,233)"/><rect x="1106.0" y="748.4" width="9.5" height="7.0" fill="rgb(236,236,238)"/><rect x="1106.0" y="755.0" width="9.5" height="7.0" fill="rgb(230,230,232)"/><rect x="1115.2" y="748.4" width="9.5" height="7.0" fill="rgb(215,215,217)"/><rect x="1115.2" y="755.0" width="9.5" height="7.0" fill="rgb(222,222,224)"/><rect x="1124.3" y="748.4" width="9.5" height="7.0" fill="rgb(210,210,212)"/><rect x="1124.3" y="755.0" width="9.5" height="7.0" fill="rgb(223,223,225)"/><rect x="1133.5" y="748.4" width="9.5" height="7.0" fill="rgb(212,212,214)"/><rect x="1133.5" y="755.0" width="9.5" height="7.0" fill="rgb(225,225,227)"/><rect x="1142.7" y="748.4" width="9.5" height="7.0" fill="rgb(229,229,231)"/><rect x="1142.7" y="755.0" width="9.5" height="7.0" fill="rgb(225,225,227)"/><rect x="1151.8" y="748.4" width="9.5" height="7.0" fill="rgb(208,208,210)"/><rect x="1151.8" y="755.0" width="9.5" height="7.0" fill="rgb(233,233,235)"/><rect x="1161.0" y="748.4" width="9.5" height="7.0" fill="rgb(234,234,236)"/><rect x="1161.0" y="755.0" width="9.5" height="7.0" fill="rgb(236,236,238)"/><rect x="1170.2" y="748.4" width="9.5" height="7.0" fill="rgb(213,213,215)"/><rect x="1170.2" y="755.0" width="9.5" height="7.0" fill="rgb(226,226,228)"/><rect x="1179.4" y="748.4" width="9.5" height="7.0" fill="rgb(217,217,219)"/><rect x="1179.4" y="755.0" width="9.5" height="7.0" fill="rgb(218,218,220)"/><rect x="1188.5" y="748.4" width="9.5" height="7.0" fill="rgb(212,212,214)"/><rect x="1188.5" y="755.0" width="9.5" height="7.0" fill="rgb(231,231,233)"/><rect x="1216.5" y="748.4" width="9.5" height="7.0" fill="rgb(207,207,209)"/><rect x="1216.5" y="755.0" width="9.5" height="7.0" fill="rgb(211,211,213)"/><rect x="1225.7" y="748.4" width="9.5" height="7.0" fill="rgb(209,209,211)"/><rect x="1225.7" y="755.0" width="9.5" height="7.0" fill="rgb(218,218,220)"/><rect x="1234.8" y="748.4" width="9.5" height="7.0" fill="rgb(200,200,202)"/><rect x="1234.8" y="755.0" width="9.5" height="7.0" fill="rgb(204,204,206)"/><rect x="1244.0" y="748.4" width="9.5" height="7.0" fill="rgb(212,212,214)"/><rect x="1244.0" y="755.0" width="9.5" height="7.0" fill="rgb(227,227,229)"/><rect x="1253.2" y="748.4" width="9.5" height="7.0" fill="rgb(206,206,208)"/><rect x="1253.2" y="755.0" width="9.5" height="7.0" fill="rgb(219,219,221)"/><rect x="1262.3" y="748.4" width="9.5" height="7.0" fill="rgb(210,210,212)"/><rect x="1262.3" y="755.0" width="9.5" height="7.0" fill="rgb(221,221,223)"/><rect x="1271.5" y="748.4" width="9.5" height="7.0" fill="rgb(213,213,215)"/><rect x="1271.5" y="755.0" width="9.5" height="7.0" fill="rgb(201,201,203)"/><rect x="1280.7" y="748.4" width="9.5" height="7.0" fill="rgb(204,204,206)"/><rect x="1280.7" y="755.0" width="9.5" height="7.0" fill="rgb(228,228,230)"/><rect x="1289.8" y="748.4" width="9.5" height="7.0" fill="rgb(217,217,219)"/><rect x="1289.8" y="755.0" width="9.5" height="7.0" fill="rgb(224,224,226)"/><rect x="1299.0" y="748.4" width="9.5" height="7.0" fill="rgb(217,217,219)"/><rect x="1299.0" y="755.0" width="9.5" height="7.0" fill="rgb(221,221,223)"/><rect x="1308.2" y="748.4" width="9.5" height="7.0" fill="rgb(215,215,217)"/><rect x="1308.2" y="755.0" width="9.5" height="7.0" fill="rgb(217,217,219)"/><rect x="1317.3" y="748.4" width="9.5" height="7.0" fill="rgb(202,202,204)"/><rect x="1317.3" y="755.0" width="9.5" height="7.0" fill="rgb(212,212,214)"/><rect x="1336.3" y="748.4" width="9.4" height="7.0" fill="rgb(218,218,220)"/><rect x="1336.3" y="755.0" width="9.4" height="7.0" fill="rgb(228,228,230)"/><rect x="1345.3" y="748.4" width="9.4" height="7.0" fill="rgb(209,209,211)"/><rect x="1345.3" y="755.0" width="9.4" height="7.0" fill="rgb(231,231,233)"/><rect x="1354.4" y="748.4" width="9.4" height="7.0" fill="rgb(226,226,228)"/><rect x="1354.4" y="755.0" width="9.4" height="7.0" fill="rgb(228,228,230)"/><rect x="1363.5" y="748.4" width="9.4" height="7.0" fill="rgb(207,207,209)"/><rect x="1363.5" y="755.0" width="9.4" height="7.0" fill="rgb(222,222,224)"/><rect x="738.4" y="780.5" width="9.4" height="9.4" fill="rgb(202,202,204)"/><rect x="738.4" y="789.6" width="9.4" height="9.4" fill="rgb(216,216,218)"/><rect x="747.5" y="780.5" width="9.4" height="9.4" fill="rgb(214,214,216)"/><rect x="747.5" y="789.6" width="9.4" height="9.4" fill="rgb(215,215,217)"/><rect x="756.6" y="780.5" width="9.4" height="9.4" fill="rgb(203,203,205)"/><rect x="756.6" y="789.6" width="9.4" height="9.4" fill="rgb(220,220,222)"/><rect x="765.6" y="780.5" width="9.4" height="9.4" fill="rgb(219,219,221)"/><rect x="765.6" y="789.6" width="9.4" height="9.4" fill="rgb(211,211,213)"/><rect x="774.7" y="780.5" width="9.4" height="9.4" fill="rgb(203,203,205)"/><rect x="774.7" y="789.6" width="9.4" height="9.4" fill="rgb(210,210,212)"/><rect x="783.8" y="780.5" width="9.4" height="9.4" fill="rgb(218,218,220)"/><rect x="783.8" y="789.6" width="9.4" height="9.4" fill="rgb(214,214,216)"/><rect x="792.9" y="780.5" width="9.4" height="9.4" fill="rgb(217,217,219)"/><rect x="792.9" y="789.6" width="9.4" height="9.4" fill="rgb(213,213,215)"/><rect x="802.0" y="780.5" width="9.4" height="9.4" fill="rgb(211,211,213)"/><rect x="802.0" y="789.6" width="9.4" height="9.4" fill="rgb(229,229,231)"/><rect x="811.0" y="780.5" width="9.4" height="9.4" fill="rgb(200,200,202)"/><rect x="811.0" y="789.6" width="9.4" height="9.4" fill="rgb(212,212,214)"/><rect x="820.1" y="780.5" width="9.4" height="9.4" fill="rgb(227,227,229)"/><rect x="820.1" y="789.6" width="9.4" height="9.4" fill="rgb(216,216,218)"/><rect x="829.2" y="780.5" width="9.4" height="9.4" fill="rgb(219,219,221)"/><rect x="829.2" y="789.6" width="9.4" height="9.4" fill="rgb(222,222,224)"/><rect x="838.3" y="780.5" width="9.4" height="9.4" fill="rgb(204,204,206)"/><rect x="838.3" y="789.6" width="9.4" height="9.4" fill="rgb(230,230,232)"/><rect x="847.4" y="780.5" width="9.4" height="9.4" fill="rgb(208,208,210)"/><rect x="847.4" y="789.6" width="9.4" height="9.4" fill="rgb(221,221,223)"/><rect x="856.4" y="780.5" width="9.4" height="9.4" fill="rgb(219,219,221)"/><rect x="856.4" y="789.6" width="9.4" height="9.4" fill="rgb(221,221,223)"/><rect x="865.5" y="780.5" width="9.4" height="9.4" fill="rgb(215,215,217)"/><rect x="865.5" y="789.6" width="9.4" height="9.4" fill="rgb(213,213,215)"/><rect x="884.4" y="780.5" width="9.5" height="9.4" fill="rgb(185,185,187)"/><rect x="884.4" y="789.6" width="9.5" height="9.4" fill="rgb(219,219,221)"/><rect x="893.6" y="780.5" width="9.5" height="9.4" fill="rgb(197,197,199)"/><rect x="893.6" y="789.6" width="9.5" height="9.4" fill="rgb(206,206,208)"/><rect x="902.8" y="780.5" width="9.5" height="9.4" fill="rgb(197,197,199)"/><rect x="902.8" y="789.6" width="9.5" height="9.4" fill="rgb(207,207,209)"/><rect x="930.4" y="780.5" width="9.5" height="9.4" fill="rgb(211,211,213)"/><rect x="930.4" y="789.6" width="9.5" height="9.4" fill="rgb(214,214,216)"/><rect x="939.6" y="780.5" width="9.5" height="9.4" fill="rgb(206,206,208)"/><rect x="939.6" y="789.6" width="9.5" height="9.4" fill="rgb(215,215,217)"/><rect x="948.7" y="780.5" width="9.5" height="9.4" fill="rgb(225,225,227)"/><rect x="948.7" y="789.6" width="9.5" height="9.4" fill="rgb(222,222,224)"/><rect x="957.9" y="780.5" width="9.5" height="9.4" fill="rgb(225,225,227)"/><rect x="957.9" y="789.6" width="9.5" height="9.4" fill="rgb(220,220,222)"/><rect x="967.0" y="780.5" width="9.5" height="9.4" fill="rgb(217,217,219)"/><rect x="967.0" y="789.6" width="9.5" height="9.4" fill="rgb(238,238,240)"/><rect x="976.2" y="780.5" width="9.5" height="9.4" fill="rgb(224,224,226)"/><rect x="976.2" y="789.6" width="9.5" height="9.4" fill="rgb(217,217,219)"/><rect x="985.4" y="780.5" width="9.5" height="9.4" fill="rgb(218,218,220)"/><rect x="985.4" y="789.6" width="9.5" height="9.4" fill="rgb(212,212,214)"/><rect x="994.5" y="780.5" width="9.5" height="9.4" fill="rgb(208,208,210)"/><rect x="994.5" y="789.6" width="9.5" height="9.4" fill="rgb(228,228,230)"/><rect x="1022.0" y="780.5" width="9.5" height="9.4" fill="rgb(211,211,213)"/><rect x="1022.0" y="789.6" width="9.5" height="9.4" fill="rgb(214,214,216)"/><rect x="1031.2" y="780.5" width="9.5" height="9.4" fill="rgb(222,222,224)"/><rect x="1031.2" y="789.6" width="9.5" height="9.4" fill="rgb(227,227,229)"/><rect x="1040.4" y="780.5" width="9.5" height="9.4" fill="rgb(200,200,202)"/><rect x="1040.4" y="789.6" width="9.5" height="9.4" fill="rgb(234,234,236)"/><rect x="1049.6" y="780.5" width="9.5" height="9.4" fill="rgb(216,216,218)"/><rect x="1049.6" y="789.6" width="9.5" height="9.4" fill="rgb(219,219,221)"/><rect x="1058.8" y="780.5" width="9.5" height="9.4" fill="rgb(220,220,222)"/><rect x="1058.8" y="789.6" width="9.5" height="9.4" fill="rgb(237,237,239)"/><rect x="1068.0" y="780.5" width="9.5" height="9.4" fill="rgb(202,202,204)"/><rect x="1068.0" y="789.6" width="9.5" height="9.4" fill="rgb(232,232,234)"/><rect x="1077.2" y="780.5" width="9.5" height="9.4" fill="rgb(227,227,229)"/><rect x="1077.2" y="789.6" width="9.5" height="9.4" fill="rgb(218,218,220)"/><rect x="1105.2" y="780.5" width="9.5" height="9.4" fill="rgb(224,224,226)"/><rect x="1105.2" y="789.6" width="9.5" height="9.4" fill="rgb(229,229,231)"/><rect x="1114.4" y="780.5" width="9.5" height="9.4" fill="rgb(213,213,215)"/><rect x="1114.4" y="789.6" width="9.5" height="9.4" fill="rgb(229,229,231)"/><rect x="1123.5" y="780.5" width="9.5" height="9.4" fill="rgb(232,232,234)"/><rect x="1123.5" y="789.6" width="9.5" height="9.4" fill="rgb(225,225,227)"/><rect x="1132.7" y="780.5" width="9.5" height="9.4" fill="rgb(225,225,227)"/><rect x="1132.7" y="789.6" width="9.5" height="9.4" fill="rgb(235,235,237)"/><rect x="1141.9" y="780.5" width="9.5" height="9.4" fill="rgb(232,232,234)"/><rect x="1141.9" y="789.6" width="9.5" height="9.4" fill="rgb(234,234,236)"/><rect x="1151.0" y="780.5" width="9.5" height="9.4" fill="rgb(218,218,220)"/><rect x="1151.0" y="789.6" width="9.5" height="9.4" fill="rgb(238,238,240)"/><rect x="1160.2" y="780.5" width="9.5" height="9.4" fill="rgb(215,215,217)"/><rect x="1160.2" y="789.6" width="9.5" height="9.4" fill="rgb(237,237,239)"/><rect x="1169.3" y="780.5" width="9.5" height="9.4" fill="rgb(233,233,235)"/><rect x="1169.3" y="789.6" width="9.5" height="9.4" fill="rgb(243,243,245)"/><rect x="1178.5" y="780.5" width="9.5" height="9.4" fill="rgb(232,232,234)"/><rect x="1178.5" y="789.6" width="9.5" height="9.4" fill="rgb(245,245,247)"/><rect x="1187.7" y="780.5" width="9.5" height="9.4" fill="rgb(214,214,216)"/><rect x="1187.7" y="789.6" width="9.5" height="9.4" fill="rgb(243,243,245)"/><rect x="1196.8" y="780.5" width="9.5" height="9.4" fill="rgb(215,215,217)"/><rect x="1196.8" y="789.6" width="9.5" height="9.4" fill="rgb(244,244,246)"/><rect x="1224.3" y="780.5" width="9.5" height="9.4" fill="rgb(202,202,204)"/><rect x="1224.3" y="789.6" width="9.5" height="9.4" fill="rgb(223,223,225)"/><rect x="1233.5" y="780.5" width="9.5" height="9.4" fill="rgb(215,215,217)"/><rect x="1233.5" y="789.6" width="9.5" height="9.4" fill="rgb(207,207,209)"/><rect x="1242.7" y="780.5" width="9.5" height="9.4" fill="rgb(196,196,198)"/><rect x="1242.7" y="789.6" width="9.5" height="9.4" fill="rgb(216,216,218)"/><rect x="1251.9" y="780.5" width="9.5" height="9.4" fill="rgb(205,205,207)"/><rect x="1251.9" y="789.6" width="9.5" height="9.4" fill="rgb(211,211,213)"/><rect x="1261.1" y="780.5" width="9.5" height="9.4" fill="rgb(213,213,215)"/><rect x="1261.1" y="789.6" width="9.5" height="9.4" fill="rgb(200,200,202)"/><rect x="1270.3" y="780.5" width="9.5" height="9.4" fill="rgb(190,190,192)"/><rect x="1270.3" y="789.6" width="9.5" height="9.4" fill="rgb(225,225,227)"/><rect x="1279.5" y="780.5" width="9.5" height="9.4" fill="rgb(198,198,200)"/><rect x="1279.5" y="789.6" width="9.5" height="9.4" fill="rgb(215,215,217)"/><rect x="1288.7" y="780.5" width="9.5" height="9.4" fill="rgb(198,198,200)"/><rect x="1288.7" y="789.6" width="9.5" height="9.4" fill="rgb(206,206,208)"/><rect x="1335.0" y="780.5" width="9.3" height="9.4" fill="rgb(228,228,230)"/><rect x="1335.0" y="789.6" width="9.3" height="9.4" fill="rgb(235,235,237)"/><rect x="1344.0" y="780.5" width="9.3" height="9.4" fill="rgb(217,217,219)"/><rect x="1344.0" y="789.6" width="9.3" height="9.4" fill="rgb(230,230,232)"/><rect x="1352.9" y="780.5" width="9.3" height="9.4" fill="rgb(231,231,233)"/><rect x="1352.9" y="789.6" width="9.3" height="9.4" fill="rgb(239,239,241)"/><rect x="1361.9" y="780.5" width="9.3" height="9.4" fill="rgb(217,217,219)"/><rect x="1361.9" y="789.6" width="9.3" height="9.4" fill="rgb(227,227,229)"/><rect x="1370.8" y="780.5" width="9.3" height="9.4" fill="rgb(208,208,210)"/><rect x="1370.8" y="789.6" width="9.3" height="9.4" fill="rgb(223,223,225)"/><rect x="740.2" y="815.0" width="9.4" height="9.7" fill="rgb(203,203,205)"/><rect x="740.2" y="824.4" width="9.4" height="9.7" fill="rgb(217,217,219)"/><rect x="749.3" y="815.0" width="9.4" height="9.7" fill="rgb(215,215,217)"/><rect x="749.3" y="824.4" width="9.4" height="9.7" fill="rgb(216,216,218)"/><rect x="758.5" y="815.0" width="9.4" height="9.7" fill="rgb(210,210,212)"/><rect x="758.5" y="824.4" width="9.4" height="9.7" fill="rgb(216,216,218)"/><rect x="767.6" y="815.0" width="9.4" height="9.7" fill="rgb(215,215,217)"/><rect x="767.6" y="824.4" width="9.4" height="9.7" fill="rgb(229,229,231)"/><rect x="776.7" y="815.0" width="9.4" height="9.7" fill="rgb(228,228,230)"/><rect x="776.7" y="824.4" width="9.4" height="9.7" fill="rgb(229,229,231)"/><rect x="785.8" y="815.0" width="9.4" height="9.7" fill="rgb(226,226,228)"/><rect x="785.8" y="824.4" width="9.4" height="9.7" fill="rgb(210,210,212)"/><rect x="795.0" y="815.0" width="9.4" height="9.7" fill="rgb(215,215,217)"/><rect x="795.0" y="824.4" width="9.4" height="9.7" fill="rgb(230,230,232)"/><rect x="804.1" y="815.0" width="9.4" height="9.7" fill="rgb(211,211,213)"/><rect x="804.1" y="824.4" width="9.4" height="9.7" fill="rgb(235,235,237)"/><rect x="813.2" y="815.0" width="9.4" height="9.7" fill="rgb(220,220,222)"/><rect x="813.2" y="824.4" width="9.4" height="9.7" fill="rgb(212,212,214)"/><rect x="822.4" y="815.0" width="9.4" height="9.7" fill="rgb(226,226,228)"/><rect x="822.4" y="824.4" width="9.4" height="9.7" fill="rgb(231,231,233)"/><rect x="831.5" y="815.0" width="9.4" height="9.7" fill="rgb(203,203,205)"/><rect x="831.5" y="824.4" width="9.4" height="9.7" fill="rgb(222,222,224)"/><rect x="840.6" y="815.0" width="9.4" height="9.7" fill="rgb(225,225,227)"/><rect x="840.6" y="824.4" width="9.4" height="9.7" fill="rgb(232,232,234)"/><rect x="849.7" y="815.0" width="9.4" height="9.7" fill="rgb(224,224,226)"/><rect x="849.7" y="824.4" width="9.4" height="9.7" fill="rgb(216,216,218)"/><rect x="858.9" y="815.0" width="9.4" height="9.7" fill="rgb(215,215,217)"/><rect x="858.9" y="824.4" width="9.4" height="9.7" fill="rgb(238,238,240)"/><rect x="886.4" y="815.0" width="9.4" height="9.7" fill="rgb(187,187,189)"/><rect x="886.4" y="824.4" width="9.4" height="9.7" fill="rgb(205,205,207)"/><rect x="895.5" y="815.0" width="9.4" height="9.7" fill="rgb(207,207,209)"/><rect x="895.5" y="824.4" width="9.4" height="9.7" fill="rgb(212,212,214)"/><rect x="904.7" y="815.0" width="9.4" height="9.7" fill="rgb(192,192,194)"/><rect x="904.7" y="824.4" width="9.4" height="9.7" fill="rgb(194,194,196)"/><rect x="931.6" y="815.0" width="9.6" height="9.7" fill="rgb(227,227,229)"/><rect x="931.6" y="824.4" width="9.6" height="9.7" fill="rgb(235,235,237)"/><rect x="940.9" y="815.0" width="9.6" height="9.7" fill="rgb(214,214,216)"/><rect x="940.9" y="824.4" width="9.6" height="9.7" fill="rgb(226,226,228)"/><rect x="950.1" y="815.0" width="9.6" height="9.7" fill="rgb(214,214,216)"/><rect x="950.1" y="824.4" width="9.6" height="9.7" fill="rgb(235,235,237)"/><rect x="959.4" y="815.0" width="9.6" height="9.7" fill="rgb(204,204,206)"/><rect x="959.4" y="824.4" width="9.6" height="9.7" fill="rgb(235,235,237)"/><rect x="968.7" y="815.0" width="9.6" height="9.7" fill="rgb(207,207,209)"/><rect x="968.7" y="824.4" width="9.6" height="9.7" fill="rgb(217,217,219)"/><rect x="977.9" y="815.0" width="9.6" height="9.7" fill="rgb(206,206,208)"/><rect x="977.9" y="824.4" width="9.6" height="9.7" fill="rgb(212,212,214)"/><rect x="987.2" y="815.0" width="9.6" height="9.7" fill="rgb(206,206,208)"/><rect x="987.2" y="824.4" width="9.6" height="9.7" fill="rgb(230,230,232)"/><rect x="996.4" y="815.0" width="9.6" height="9.7" fill="rgb(230,230,232)"/><rect x="996.4" y="824.4" width="9.6" height="9.7" fill="rgb(226,226,228)"/><rect x="1024.0" y="815.0" width="9.5" height="9.7" fill="rgb(225,225,227)"/><rect x="1024.0" y="824.4" width="9.5" height="9.7" fill="rgb(230,230,232)"/><rect x="1033.2" y="815.0" width="9.5" height="9.7" fill="rgb(204,204,206)"/><rect x="1033.2" y="824.4" width="9.5" height="9.7" fill="rgb(229,229,231)"/><rect x="1042.3" y="815.0" width="9.5" height="9.7" fill="rgb(226,226,228)"/><rect x="1042.3" y="824.4" width="9.5" height="9.7" fill="rgb(229,229,231)"/><rect x="1051.5" y="815.0" width="9.5" height="9.7" fill="rgb(215,215,217)"/><rect x="1051.5" y="824.4" width="9.5" height="9.7" fill="rgb(231,231,233)"/><rect x="1060.6" y="815.0" width="9.5" height="9.7" fill="rgb(211,211,213)"/><rect x="1060.6" y="824.4" width="9.5" height="9.7" fill="rgb(214,214,216)"/><rect x="1069.8" y="815.0" width="9.5" height="9.7" fill="rgb(217,217,219)"/><rect x="1069.8" y="824.4" width="9.5" height="9.7" fill="rgb(227,227,229)"/><rect x="1078.9" y="815.0" width="9.5" height="9.7" fill="rgb(204,204,206)"/><rect x="1078.9" y="824.4" width="9.5" height="9.7" fill="rgb(210,210,212)"/><rect x="1107.0" y="815.0" width="9.5" height="9.7" fill="rgb(208,208,210)"/><rect x="1107.0" y="824.4" width="9.5" height="9.7" fill="rgb(243,243,245)"/><rect x="1116.2" y="815.0" width="9.5" height="9.7" fill="rgb(231,231,233)"/><rect x="1116.2" y="824.4" width="9.5" height="9.7" fill="rgb(238,238,240)"/><rect x="1125.3" y="815.0" width="9.5" height="9.7" fill="rgb(211,211,213)"/><rect x="1125.3" y="824.4" width="9.5" height="9.7" fill="rgb(234,234,236)"/><rect x="1134.5" y="815.0" width="9.5" height="9.7" fill="rgb(231,231,233)"/><rect x="1134.5" y="824.4" width="9.5" height="9.7" fill="rgb(222,222,224)"/><rect x="1143.7" y="815.0" width="9.5" height="9.7" fill="rgb(221,221,223)"/><rect x="1143.7" y="824.4" width="9.5" height="9.7" fill="rgb(245,245,247)"/><rect x="1152.9" y="815.0" width="9.5" height="9.7" fill="rgb(214,214,216)"/><rect x="1152.9" y="824.4" width="9.5" height="9.7" fill="rgb(244,244,246)"/><rect x="1162.0" y="815.0" width="9.5" height="9.7" fill="rgb(235,235,237)"/><rect x="1162.0" y="824.4" width="9.5" height="9.7" fill="rgb(224,224,226)"/><rect x="1171.2" y="815.0" width="9.5" height="9.7" fill="rgb(208,208,210)"/><rect x="1171.2" y="824.4" width="9.5" height="9.7" fill="rgb(226,226,228)"/><rect x="1180.4" y="815.0" width="9.5" height="9.7" fill="rgb(214,214,216)"/><rect x="1180.4" y="824.4" width="9.5" height="9.7" fill="rgb(227,227,229)"/><rect x="1189.6" y="815.0" width="9.5" height="9.7" fill="rgb(224,224,226)"/><rect x="1189.6" y="824.4" width="9.5" height="9.7" fill="rgb(225,225,227)"/><rect x="1198.7" y="815.0" width="9.5" height="9.7" fill="rgb(232,232,234)"/><rect x="1198.7" y="824.4" width="9.5" height="9.7" fill="rgb(236,236,238)"/><rect x="1217.2" y="815.0" width="9.5" height="9.7" fill="rgb(200,200,202)"/><rect x="1217.2" y="824.4" width="9.5" height="9.7" fill="rgb(208,208,210)"/><rect x="1226.4" y="815.0" width="9.5" height="9.7" fill="rgb(207,207,209)"/><rect x="1226.4" y="824.4" width="9.5" height="9.7" fill="rgb(213,213,215)"/><rect x="1235.5" y="815.0" width="9.5" height="9.7" fill="rgb(216,216,218)"/><rect x="1235.5" y="824.4" width="9.5" height="9.7" fill="rgb(204,204,206)"/><rect x="1244.7" y="815.0" width="9.5" height="9.7" fill="rgb(191,191,193)"/><rect x="1244.7" y="824.4" width="9.5" height="9.7" fill="rgb(223,223,225)"/><rect x="1253.8" y="815.0" width="9.5" height="9.7" fill="rgb(201,201,203)"/><rect x="1253.8" y="824.4" width="9.5" height="9.7" fill="rgb(228,228,230)"/><rect x="1263.0" y="815.0" width="9.5" height="9.7" fill="rgb(204,204,206)"/><rect x="1263.0" y="824.4" width="9.5" height="9.7" fill="rgb(221,221,223)"/><rect x="1272.1" y="815.0" width="9.5" height="9.7" fill="rgb(208,208,210)"/><rect x="1272.1" y="824.4" width="9.5" height="9.7" fill="rgb(226,226,228)"/><rect x="1281.3" y="815.0" width="9.5" height="9.7" fill="rgb(218,218,220)"/><rect x="1281.3" y="824.4" width="9.5" height="9.7" fill="rgb(216,216,218)"/><rect x="1290.4" y="815.0" width="9.5" height="9.7" fill="rgb(203,203,205)"/><rect x="1290.4" y="824.4" width="9.5" height="9.7" fill="rgb(226,226,228)"/><rect x="1337.0" y="815.0" width="9.3" height="9.7" fill="rgb(234,234,236)"/><rect x="1337.0" y="824.4" width="9.3" height="9.7" fill="rgb(232,232,234)"/><rect x="1346.0" y="815.0" width="9.3" height="9.7" fill="rgb(210,210,212)"/><rect x="1346.0" y="824.4" width="9.3" height="9.7" fill="rgb(233,233,235)"/><rect x="1355.0" y="815.0" width="9.3" height="9.7" fill="rgb(210,210,212)"/><rect x="1355.0" y="824.4" width="9.3" height="9.7" fill="rgb(232,232,234)"/><rect x="1364.0" y="815.0" width="9.3" height="9.7" fill="rgb(222,222,224)"/><rect x="1364.0" y="824.4" width="9.3" height="9.7" fill="rgb(216,216,218)"/><rect x="740.2" y="849.5" width="9.4" height="7.5" fill="rgb(227,227,229)"/><rect x="740.2" y="856.8" width="9.4" height="7.5" fill="rgb(224,224,226)"/><rect x="749.3" y="849.5" width="9.4" height="7.5" fill="rgb(224,224,226)"/><rect x="749.3" y="856.8" width="9.4" height="7.5" fill="rgb(215,215,217)"/><rect x="758.5" y="849.5" width="9.4" height="7.5" fill="rgb(219,219,221)"/><rect x="758.5" y="856.8" width="9.4" height="7.5" fill="rgb(210,210,212)"/><rect x="767.6" y="849.5" width="9.4" height="7.5" fill="rgb(224,224,226)"/><rect x="767.6" y="856.8" width="9.4" height="7.5" fill="rgb(235,235,237)"/><rect x="776.7" y="849.5" width="9.4" height="7.5" fill="rgb(204,204,206)"/><rect x="776.7" y="856.8" width="9.4" height="7.5" fill="rgb(215,215,217)"/><rect x="785.8" y="849.5" width="9.4" height="7.5" fill="rgb(204,204,206)"/><rect x="785.8" y="856.8" width="9.4" height="7.5" fill="rgb(225,225,227)"/><rect x="795.0" y="849.5" width="9.4" height="7.5" fill="rgb(219,219,221)"/><rect x="795.0" y="856.8" width="9.4" height="7.5" fill="rgb(233,233,235)"/><rect x="804.1" y="849.5" width="9.4" height="7.5" fill="rgb(203,203,205)"/><rect x="804.1" y="856.8" width="9.4" height="7.5" fill="rgb(227,227,229)"/><rect x="813.2" y="849.5" width="9.4" height="7.5" fill="rgb(201,201,203)"/><rect x="813.2" y="856.8" width="9.4" height="7.5" fill="rgb(220,220,222)"/><rect x="822.4" y="849.5" width="9.4" height="7.5" fill="rgb(221,221,223)"/><rect x="822.4" y="856.8" width="9.4" height="7.5" fill="rgb(226,226,228)"/><rect x="831.5" y="849.5" width="9.4" height="7.5" fill="rgb(216,216,218)"/><rect x="831.5" y="856.8" width="9.4" height="7.5" fill="rgb(227,227,229)"/><rect x="840.6" y="849.5" width="9.4" height="7.5" fill="rgb(215,215,217)"/><rect x="840.6" y="856.8" width="9.4" height="7.5" fill="rgb(235,235,237)"/><rect x="849.7" y="849.5" width="9.4" height="7.5" fill="rgb(224,224,226)"/><rect x="849.7" y="856.8" width="9.4" height="7.5" fill="rgb(213,213,215)"/><rect x="858.9" y="849.5" width="9.4" height="7.5" fill="rgb(228,228,230)"/><rect x="858.9" y="856.8" width="9.4" height="7.5" fill="rgb(227,227,229)"/><rect x="886.4" y="849.5" width="9.4" height="7.5" fill="rgb(183,183,185)"/><rect x="886.4" y="856.8" width="9.4" height="7.5" fill="rgb(199,199,201)"/><rect x="895.5" y="849.5" width="9.4" height="7.5" fill="rgb(188,188,190)"/><rect x="895.5" y="856.8" width="9.4" height="7.5" fill="rgb(200,200,202)"/><rect x="904.7" y="849.5" width="9.4" height="7.5" fill="rgb(183,183,185)"/><rect x="904.7" y="856.8" width="9.4" height="7.5" fill="rgb(216,216,218)"/><rect x="931.6" y="849.5" width="9.6" height="7.5" fill="rgb(205,205,207)"/><rect x="931.6" y="856.8" width="9.6" height="7.5" fill="rgb(228,228,230)"/><rect x="940.9" y="849.5" width="9.6" height="7.5" fill="rgb(216,216,218)"/><rect x="940.9" y="856.8" width="9.6" height="7.5" fill="rgb(229,229,231)"/><rect x="950.1" y="849.5" width="9.6" height="7.5" fill="rgb(202,202,204)"/><rect x="950.1" y="856.8" width="9.6" height="7.5" fill="rgb(236,236,238)"/><rect x="959.4" y="849.5" width="9.6" height="7.5" fill="rgb(230,230,232)"/><rect x="959.4" y="856.8" width="9.6" height="7.5" fill="rgb(214,214,216)"/><rect x="968.7" y="849.5" width="9.6" height="7.5" fill="rgb(216,216,218)"/><rect x="968.7" y="856.8" width="9.6" height="7.5" fill="rgb(222,222,224)"/><rect x="977.9" y="849.5" width="9.6" height="7.5" fill="rgb(221,221,223)"/><rect x="977.9" y="856.8" width="9.6" height="7.5" fill="rgb(228,228,230)"/><rect x="987.2" y="849.5" width="9.6" height="7.5" fill="rgb(221,221,223)"/><rect x="987.2" y="856.8" width="9.6" height="7.5" fill="rgb(228,228,230)"/><rect x="996.4" y="849.5" width="9.6" height="7.5" fill="rgb(208,208,210)"/><rect x="996.4" y="856.8" width="9.6" height="7.5" fill="rgb(234,234,236)"/><rect x="1024.0" y="849.5" width="9.4" height="7.5" fill="rgb(208,208,210)"/><rect x="1024.0" y="856.8" width="9.4" height="7.5" fill="rgb(224,224,226)"/><rect x="1033.1" y="849.5" width="9.4" height="7.5" fill="rgb(216,216,218)"/><rect x="1033.1" y="856.8" width="9.4" height="7.5" fill="rgb(227,227,229)"/><rect x="1042.3" y="849.5" width="9.4" height="7.5" fill="rgb(225,225,227)"/><rect x="1042.3" y="856.8" width="9.4" height="7.5" fill="rgb(225,225,227)"/><rect x="1051.4" y="849.5" width="9.4" height="7.5" fill="rgb(216,216,218)"/><rect x="1051.4" y="856.8" width="9.4" height="7.5" fill="rgb(217,217,219)"/><rect x="1060.5" y="849.5" width="9.4" height="7.5" fill="rgb(222,222,224)"/><rect x="1060.5" y="856.8" width="9.4" height="7.5" fill="rgb(226,226,228)"/><rect x="1069.7" y="849.5" width="9.4" height="7.5" fill="rgb(228,228,230)"/><rect x="1069.7" y="856.8" width="9.4" height="7.5" fill="rgb(238,238,240)"/><rect x="1107.0" y="849.5" width="9.5" height="7.5" fill="rgb(216,216,218)"/><rect x="1107.0" y="856.8" width="9.5" height="7.5" fill="rgb(235,235,237)"/><rect x="1116.2" y="849.5" width="9.5" height="7.5" fill="rgb(236,236,238)"/><rect x="1116.2" y="856.8" width="9.5" height="7.5" fill="rgb(224,224,226)"/><rect x="1125.4" y="849.5" width="9.5" height="7.5" fill="rgb(234,234,236)"/><rect x="1125.4" y="856.8" width="9.5" height="7.5" fill="rgb(232,232,234)"/><rect x="1134.5" y="849.5" width="9.5" height="7.5" fill="rgb(212,212,214)"/><rect x="1134.5" y="856.8" width="9.5" height="7.5" fill="rgb(231,231,233)"/><rect x="1143.7" y="849.5" width="9.5" height="7.5" fill="rgb(211,211,213)"/><rect x="1143.7" y="856.8" width="9.5" height="7.5" fill="rgb(230,230,232)"/><rect x="1152.9" y="849.5" width="9.5" height="7.5" fill="rgb(222,222,224)"/><rect x="1152.9" y="856.8" width="9.5" height="7.5" fill="rgb(228,228,230)"/><rect x="1162.1" y="849.5" width="9.5" height="7.5" fill="rgb(210,210,212)"/><rect x="1162.1" y="856.8" width="9.5" height="7.5" fill="rgb(239,239,241)"/><rect x="1171.3" y="849.5" width="9.5" height="7.5" fill="rgb(215,215,217)"/><rect x="1171.3" y="856.8" width="9.5" height="7.5" fill="rgb(231,231,233)"/><rect x="1180.5" y="849.5" width="9.5" height="7.5" fill="rgb(210,210,212)"/><rect x="1180.5" y="856.8" width="9.5" height="7.5" fill="rgb(224,224,226)"/><rect x="1189.6" y="849.5" width="9.5" height="7.5" fill="rgb(229,229,231)"/><rect x="1189.6" y="856.8" width="9.5" height="7.5" fill="rgb(227,227,229)"/><rect x="1198.8" y="849.5" width="9.5" height="7.5" fill="rgb(233,233,235)"/><rect x="1198.8" y="856.8" width="9.5" height="7.5" fill="rgb(221,221,223)"/><rect x="1217.2" y="849.5" width="9.5" height="7.5" fill="rgb(218,218,220)"/><rect x="1217.2" y="856.8" width="9.5" height="7.5" fill="rgb(224,224,226)"/><rect x="1226.4" y="849.5" width="9.5" height="7.5" fill="rgb(194,194,196)"/><rect x="1226.4" y="856.8" width="9.5" height="7.5" fill="rgb(222,222,224)"/><rect x="1235.5" y="849.5" width="9.5" height="7.5" fill="rgb(210,210,212)"/><rect x="1235.5" y="856.8" width="9.5" height="7.5" fill="rgb(221,221,223)"/><rect x="1244.7" y="849.5" width="9.5" height="7.5" fill="rgb(201,201,203)"/><rect x="1244.7" y="856.8" width="9.5" height="7.5" fill="rgb(204,204,206)"/><rect x="1253.8" y="849.5" width="9.5" height="7.5" fill="rgb(198,198,200)"/><rect x="1253.8" y="856.8" width="9.5" height="7.5" fill="rgb(228,228,230)"/><rect x="1263.0" y="849.5" width="9.5" height="7.5" fill="rgb(194,194,196)"/><rect x="1263.0" y="856.8" width="9.5" height="7.5" fill="rgb(214,214,216)"/><rect x="1272.1" y="849.5" width="9.5" height="7.5" fill="rgb(197,197,199)"/><rect x="1272.1" y="856.8" width="9.5" height="7.5" fill="rgb(223,223,225)"/><rect x="1281.3" y="849.5" width="9.5" height="7.5" fill="rgb(193,193,195)"/><rect x="1281.3" y="856.8" width="9.5" height="7.5" fill="rgb(212,212,214)"/><rect x="1290.4" y="849.5" width="9.5" height="7.5" fill="rgb(218,218,220)"/><rect x="1290.4" y="856.8" width="9.5" height="7.5" fill="rgb(215,215,217)"/><rect x="1337.0" y="849.5" width="9.3" height="7.5" fill="rgb(211,211,213)"/><rect x="1337.0" y="856.8" width="9.3" height="7.5" fill="rgb(237,237,239)"/><rect x="1346.0" y="849.5" width="9.3" height="7.5" fill="rgb(232,232,234)"/><rect x="1346.0" y="856.8" width="9.3" height="7.5" fill="rgb(223,223,225)"/><rect x="1355.0" y="849.5" width="9.3" height="7.5" fill="rgb(211,211,213)"/><rect x="1355.0" y="856.8" width="9.3" height="7.5" fill="rgb(238,238,240)"/></svg>
</body></html>
